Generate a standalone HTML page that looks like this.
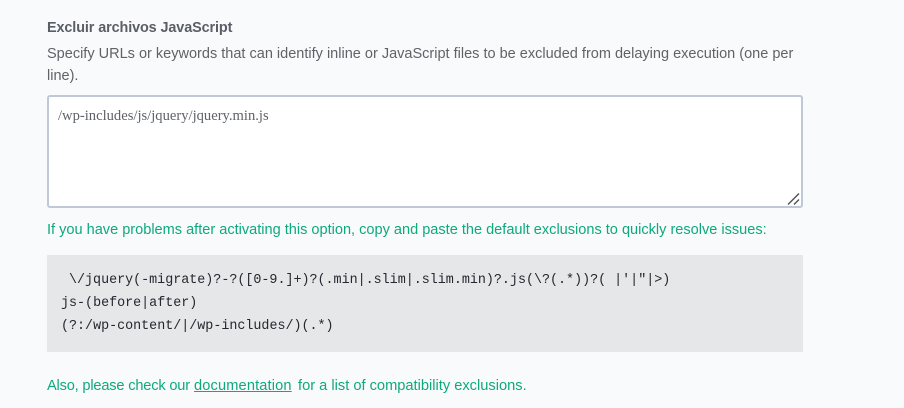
<!DOCTYPE html>
<html><head><meta charset="utf-8">
<style>
html,body{margin:0;padding:0;width:904px;height:408px;overflow:hidden;background:#f9fafc;}
.t{position:absolute;white-space:nowrap;font-family:"Liberation Sans",sans-serif;font-size:14.52px;line-height:20px;color:#5f6368;}
.g{color:#0ea97d;font-size:14.56px;}
.g a{color:#0ea97d;text-decoration:underline;}
.box{position:absolute;left:47px;top:95px;width:752px;height:109px;background:#fff;border:2px solid #bfc8d6;border-radius:3px;}
.code{position:absolute;left:47px;top:255px;width:756px;height:97px;background:#e6e7e9;}
.m{position:absolute;white-space:pre;font-family:"Liberation Mono",monospace;font-size:13.37px;line-height:20px;color:#23272f;}
</style></head><body>
<div class="t" style="left:47px;top:18px;font-size:14.4px;font-weight:bold;color:#5a5e66;letter-spacing:-.1px">Excluir archivos JavaScript</div>
<div class="t" style="left:47px;top:44px;">Specify URLs or keywords that can identify inline or JavaScript files to be excluded from delaying execution (one per</div>
<div class="t" style="left:47px;top:66px;">line).</div>
<div class="box"></div>
<div class="t" style="left:58px;top:106px;font-family:'Liberation Serif',serif;font-size:14.6px;color:#5f6368;">/wp-includes/js/jquery/jquery.min.js</div>
<svg style="position:absolute;left:780px;top:185px" width="30" height="30"><path d="M8 19.5 L19 8.5 M14 19.5 L19 14.5" stroke="#505050" stroke-width="1.4" fill="none"/></svg>
<div class="t g" style="left:47px;top:220px;">If you have problems after activating this option, copy and paste the default exclusions to quickly resolve issues:</div>
<div class="code"></div>
<div class="m" style="left:69px;top:271px;">\/jquery(-migrate)?-?([0-9.]+)?(.min|.slim|.slim.min)?.js(\?(.*))?( |'|"|&gt;)</div>
<div class="m" style="left:61px;top:294px;">js-(before|after)</div>
<div class="m" style="left:61px;top:317px;">(?:/wp-content/|/wp-includes/)(.*)</div>
<div class="t g" style="left:47px;top:376px;font-size:14.6px;letter-spacing:-.18px;">Also, please check our</div>
<div class="t g" style="left:194px;top:376px;font-size:14.6px;letter-spacing:.15px;"><a>documentation</a></div>
<div class="t g" style="left:298px;top:376px;font-size:14.65px;">for a list of compatibility exclusions.</div>
</body></html>
